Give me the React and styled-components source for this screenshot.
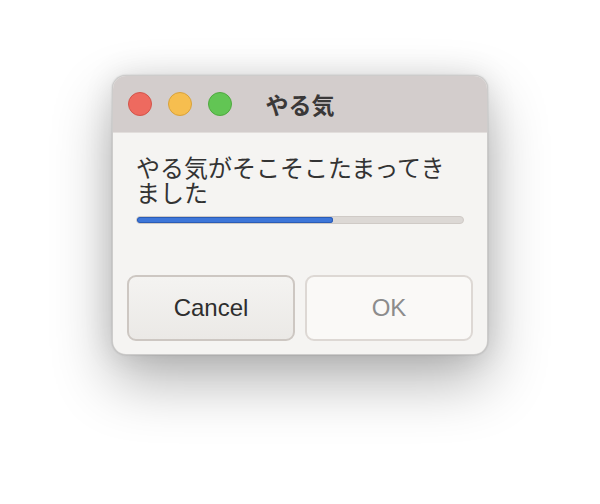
import styled, { createGlobalStyle } from "styled-components";

const Global = createGlobalStyle`
  html, body {
    margin: 0;
    padding: 0;
    background: #ffffff;
  }
`;

const Stage = styled.div`
  width: 600px;
  height: 504px;
  padding: 75px 0 0 112px;
  box-sizing: border-box;
`;

const Window = styled.div`
  width: 376px;
  height: 280px;
  box-sizing: border-box;
  display: flex;
  flex-direction: column;
  border: 1px solid rgba(0, 0, 0, 0.16);
  border-radius: 14px;
  overflow: hidden;
  background: #f5f4f2;
  box-shadow: 0 26px 60px rgba(0, 0, 0, 0.3), 0 0 30px rgba(0, 0, 0, 0.1),
    0 0 2px rgba(0, 0, 0, 0.2);
`;

const TitleBar = styled.div`
  height: 57px;
  flex-shrink: 0;
  box-sizing: border-box;
  display: grid;
  grid-template-columns: 1fr auto 1fr;
  align-items: center;
  padding: 0 15px;
  background: #d3cdcc;
  border-bottom: 1px solid #e2dedc;
`;

const Lights = styled.div`
  display: flex;
  gap: 16px;
`;

const Light = styled.span`
  width: 24px;
  height: 24px;
  box-sizing: border-box;
  border-radius: 50%;
  background: ${(p) => p.$fill};
  border: 1px solid ${(p) => p.$edge};
`;

const Title = styled.div`
  font-family: "Noto Sans CJK JP", sans-serif;
  font-weight: 700;
  font-size: 23px;
  color: #3a3838;
  line-height: 1;
`;

const Body = styled.div`
  flex: 1;
  display: flex;
  flex-direction: column;
  padding: 21px 0 0 0;
`;

const Message = styled.div`
  padding: 0 23px;
`;

const Label = styled.div`
  max-width: 318px;
  font-family: "Noto Sans CJK JP", sans-serif;
  font-size: 24px;
  line-height: 25px;
  color: #333333;
`;

const Track = styled.div`
  margin-top: 12px;
  width: 328px;
  height: 8px;
  box-sizing: border-box;
  border-radius: 4px;
  background: #dcd8d5;
  border: 1px solid #cfcac6;
  overflow: hidden;
`;

const Fill = styled.div`
  height: 100%;
  border-radius: 4px;
  background: #3d76d9;
  box-shadow: inset 0 0 0 1px #2b5cb6;
`;

const Buttons = styled.div`
  margin-top: auto;
  display: flex;
  gap: 10px;
  padding: 0 13px 13px 14px;
`;

const Button = styled.button`
  width: 168px;
  height: 66px;
  box-sizing: border-box;
  border-radius: 9px;
  font-family: "Liberation Sans", Arial, sans-serif;
  font-size: 24px;
  padding: 0;
  border: 2px solid ${(p) => (p.$muted ? "#ddd8d4" : "#cdc7c2")};
  background: ${(p) =>
    p.$muted ? "#faf9f7" : "linear-gradient(#f4f3f1, #ebe9e6)"};
  color: ${(p) => (p.$muted ? "#8c8c8c" : "#2e2e2e")};
`;

export default function App() {
  const progress = 60;
  return (
    <>
      <Global />
      <Stage>
        <Window>
          <TitleBar>
            <Lights>
              <Light $fill="#ee6a5f" $edge="#d3544a" />
              <Light $fill="#f6be4f" $edge="#d9a23a" />
              <Light $fill="#62c554" $edge="#4fa93f" />
            </Lights>
            <Title>やる気</Title>
            <span />
          </TitleBar>
          <Body>
            <Message>
              <Label>やる気がそこそこたまってきました</Label>
              <Track>
                <Fill style={{ width: `${progress}%` }} />
              </Track>
            </Message>
            <Buttons>
              <Button>Cancel</Button>
              <Button $muted>OK</Button>
            </Buttons>
          </Body>
        </Window>
      </Stage>
    </>
  );
}
